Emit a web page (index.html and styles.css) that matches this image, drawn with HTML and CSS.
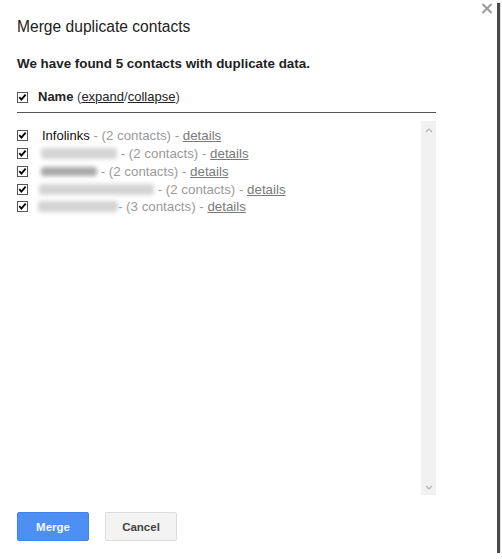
FILE: index.html
```html
<!DOCTYPE html>
<html>
<head>
<meta charset="utf-8">
<link rel="stylesheet" href="styles.css">
</head>
<body>
<div class="dialog">
  <button class="close" aria-label="Close">
    <svg width="12" height="11" viewBox="0 0 12 11"><path d="M1.5 1 L10.5 10 M10.5 1 L1.5 10" stroke="#9a9a9a" stroke-width="2" fill="none"/></svg>
  </button>
  <h1 class="title">Merge duplicate contacts</h1>
  <p class="summary">We have found 5 contacts with duplicate data.</p>
  <div class="name-row">
    <span class="cb"><svg width="11" height="11" viewBox="0 0 11 11"><rect x="0.5" y="0.5" width="10" height="10" fill="#fff" stroke="#555"/><path d="M2.3 5.2 L4.4 7.6 L8.6 2.6" stroke="#000" stroke-width="1.8" fill="none"/></svg></span>
    <span class="name-label"><b>Name</b> <span class="paren">(<a href="#">expand</a>/<a href="#">collapse</a>)</span></span>
  </div>
  <div class="divider"></div>
  <div class="listbox">
    <div class="rows">
      <div class="row">
        <span class="cb"><svg width="11" height="11" viewBox="0 0 11 11"><rect x="0.5" y="0.5" width="10" height="10" fill="#fff" stroke="#555"/><path d="M2.3 5.2 L4.4 7.6 L8.6 2.6" stroke="#000" stroke-width="1.8" fill="none"/></svg></span>
        <span class="cname">Infolinks</span><span class="meta">&nbsp;- (2 contacts) - </span><a class="details" href="#">details</a>
      </div>
      <div class="row">
        <span class="cb"><svg width="11" height="11" viewBox="0 0 11 11"><rect x="0.5" y="0.5" width="10" height="10" fill="#fff" stroke="#555"/><path d="M2.3 5.2 L4.4 7.6 L8.6 2.6" stroke="#000" stroke-width="1.8" fill="none"/></svg></span>
        <span class="blur b2"></span><span class="meta">&nbsp;- (2 contacts) - </span><a class="details" href="#">details</a>
      </div>
      <div class="row">
        <span class="cb"><svg width="11" height="11" viewBox="0 0 11 11"><rect x="0.5" y="0.5" width="10" height="10" fill="#fff" stroke="#555"/><path d="M2.3 5.2 L4.4 7.6 L8.6 2.6" stroke="#000" stroke-width="1.8" fill="none"/></svg></span>
        <span class="blur b3 dark"></span><span class="meta">&nbsp;- (2 contacts) - </span><a class="details" href="#">details</a>
      </div>
      <div class="row">
        <span class="cb"><svg width="11" height="11" viewBox="0 0 11 11"><rect x="0.5" y="0.5" width="10" height="10" fill="#fff" stroke="#555"/><path d="M2.3 5.2 L4.4 7.6 L8.6 2.6" stroke="#000" stroke-width="1.8" fill="none"/></svg></span>
        <span class="blur b4"></span><span class="meta">&nbsp;- (2 contacts) - </span><a class="details" href="#">details</a>
      </div>
      <div class="row">
        <span class="cb"><svg width="11" height="11" viewBox="0 0 11 11"><rect x="0.5" y="0.5" width="10" height="10" fill="#fff" stroke="#555"/><path d="M2.3 5.2 L4.4 7.6 L8.6 2.6" stroke="#000" stroke-width="1.8" fill="none"/></svg></span>
        <span class="blur b5"></span><span class="meta">- (3 contacts) - </span><a class="details" href="#">details</a>
      </div>
    </div>
    <div class="scrollbar">
      <svg width="8" height="5" viewBox="0 0 8 5"><path d="M1 4 L4 1 L7 4" stroke="#b4b4b4" stroke-width="1.2" fill="none"/></svg>
      <svg width="8" height="5" viewBox="0 0 8 5"><path d="M1 1 L4 4 L7 1" stroke="#b4b4b4" stroke-width="1.2" fill="none"/></svg>
    </div>
  </div>
  <div class="buttons">
    <button class="btn primary">Merge</button>
    <button class="btn secondary">Cancel</button>
  </div>
</div>
</body>
</html>
```

FILE: styles.css
```css
html, body {
  margin: 0;
  padding: 0;
  background: #fff;
}
body {
  font-family: "Liberation Sans", Arial, sans-serif;
  color: #222;
}
.dialog {
  position: relative;
  box-sizing: border-box;
  width: 497px;
  height: 553px;
  padding: 17px 0 0 17px;
  background: #fff;
  box-shadow: 3px 3px 1px #4a4a4a;
  display: flex;
  flex-direction: column;
}
.close {
  position: absolute;
  top: 3px;
  left: 481px;
  padding: 0;
  margin: 0;
  border: 0;
  background: none;
  width: 12px;
  height: 11px;
  display: block;
}
.close svg { display: block; }
.title {
  margin: 0;
  font-size: 15.6px;
  font-weight: normal;
  line-height: 20px;
  color: #222;
}
.summary {
  margin: 19px 0 0 0;
  font-size: 13.4px;
  font-weight: bold;
  line-height: 16px;
  color: #222;
}
.name-row {
  margin-top: 17px;
  display: flex;
  align-items: center;
  gap: 10px;
  height: 16px;
  font-size: 13px;
  line-height: 16px;
}
.cb {
  display: block;
  width: 11px;
  height: 11px;
  flex: none;
}
.cb svg { display: block; }
.name-label b { color: #222; }
.paren { color: #444; }
.paren a { color: #222; text-decoration: underline; }
.divider {
  margin-top: 7px;
  width: 419px;
  height: 0;
  border-top: 1px solid #555;
}
.listbox {
  margin-top: 8px;
  width: 419px;
  height: 374px;
  display: flex;
}
.rows {
  flex: 1;
  padding-top: 6px;
}
.row {
  display: flex;
  align-items: center;
  height: 17.75px;
  font-size: 13px;
  white-space: pre;
}
.row .cb { margin-right: 13px; }
.cname { color: #111; margin-left: 1px; }
.meta { color: #9a9a9a; font-size: 13.3px; }
.details { color: #7a7a7a; text-decoration: underline; font-size: 13.3px; }
.blur {
  display: block;
  height: 11px;
  background: #d4d4d4;
  filter: blur(2.2px);
  border-radius: 3px;
}
.blur.dark { background: #a8a8a8; height: 9px; }
.b2 { width: 76px; }
.b3 { width: 56px; }
.b4 { width: 115px; margin-left: -2px; }
.b5 { width: 80px; margin-left: -3px; }
.scrollbar {
  width: 15px;
  background: #f1f1f1;
  display: flex;
  flex-direction: column;
  justify-content: space-between;
  align-items: center;
  padding: 7px 0 5px;
}
.scrollbar svg { display: block; }
.buttons {
  margin-top: 17px;
  display: flex;
  gap: 16px;
}
.btn {
  box-sizing: border-box;
  width: 72px;
  height: 29px;
  font-family: "Liberation Sans", Arial, sans-serif;
  font-size: 11.5px;
  font-weight: bold;
  border-radius: 2px;
  padding: 0;
}
.primary {
  background: #4d8ff3;
  border: 1px solid #3f84ee;
  color: #f4f8ff;
}
.secondary {
  background: #f3f3f3;
  border: 1px solid #dcdcdc;
  color: #444;
}
```
